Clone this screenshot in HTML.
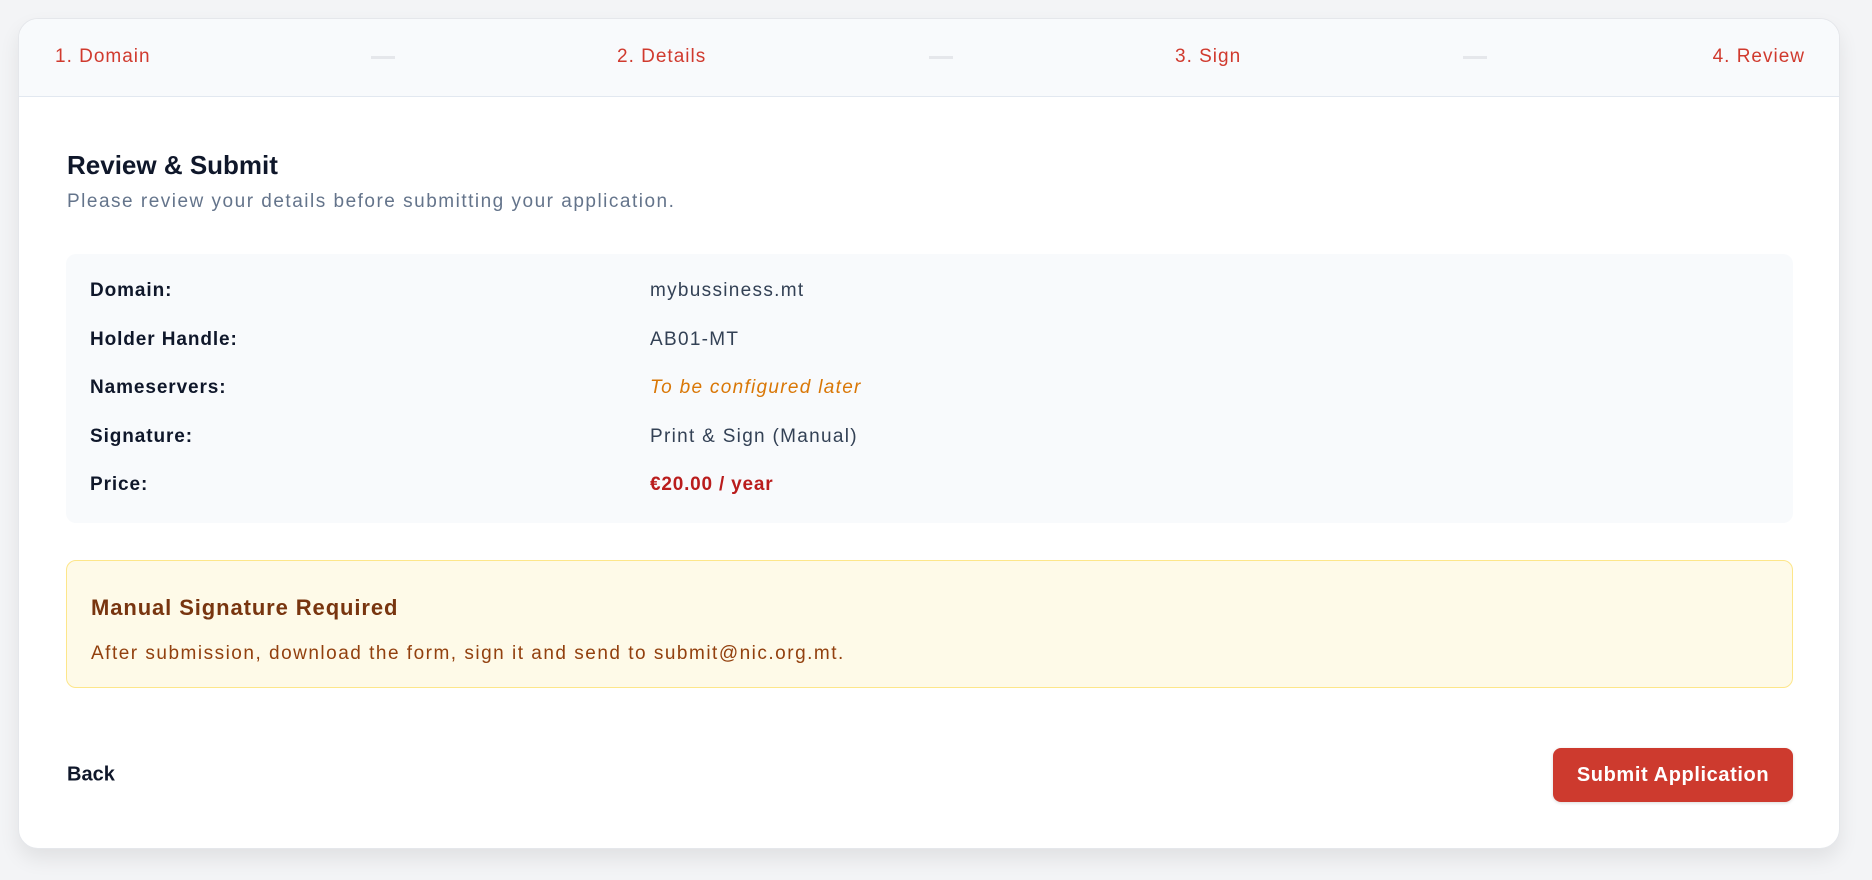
<!DOCTYPE html>
<html><head><meta charset="utf-8"><style>
*{box-sizing:border-box;margin:0;padding:0}
body{width:1872px;height:880px;background:#f3f4f6;font-family:"Liberation Sans",sans-serif;position:relative;overflow:hidden}
.card{position:absolute;left:18px;top:18px;width:1822px;height:831px;background:#fff;border:1px solid #e5e7eb;border-radius:20px;box-shadow:0 10px 20px rgba(0,0,0,.08);overflow:hidden}
.hdr{position:absolute;left:0;top:0;right:0;height:78px;background:#f8fafc;border-bottom:1px solid #e2e8f0}
.st{position:absolute;top:38px;transform:translateY(-50%);color:#d03a2e;font-size:19px;white-space:nowrap;letter-spacing:1px}
.dash{position:absolute;top:37px;width:24px;height:3px;background:#e5e7eb}
.abs{position:absolute;white-space:nowrap}
.box{position:absolute;left:47px;top:235px;width:1727px;height:269px;background:#f8fafc;border-radius:10px}
.lab{position:absolute;left:24px;font-size:19px;font-weight:bold;color:#0f172a;transform:translateY(-50%);letter-spacing:0.9px}
.val{position:absolute;left:584px;font-size:19px;color:#334155;transform:translateY(-50%);letter-spacing:1.3px}
.warn{position:absolute;left:47px;top:541px;width:1727px;height:128px;background:#fefae8;border:1px solid #fde68a;border-radius:10px}
.btn{position:absolute;left:1534px;top:729px;width:240px;height:54px;background:#cd3a2e;border-radius:8px;color:#fff;font-size:20px;font-weight:bold;display:flex;align-items:center;justify-content:center;box-shadow:0 1px 3px rgba(0,0,0,.15);letter-spacing:0.6px}
</style></head><body>
<div class="card">
 <div class="hdr">
  <div class="st" style="left:36px">1. Domain</div>
  <div class="dash" style="left:352px"></div>
  <div class="st" style="left:598px">2. Details</div>
  <div class="dash" style="left:910px"></div>
  <div class="st" style="left:1156px">3. Sign</div>
  <div class="dash" style="left:1444px"></div>
  <div class="st" style="right:34px">4. Review</div>
 </div>
 <div class="abs" style="left:48px;top:131px;font-size:26px;font-weight:bold;color:#0f172a">Review &amp; Submit</div>
 <div class="abs" style="left:48px;top:172px;font-size:19px;color:#64748b;letter-spacing:1.5px">Please review your details before submitting your application.</div>
 <div class="box">
  <div class="lab" style="top:37px">Domain:</div><div class="val" style="top:37px">mybussiness.mt</div>
  <div class="lab" style="top:86px">Holder Handle:</div><div class="val" style="top:86px">AB01-MT</div>
  <div class="lab" style="top:134px">Nameservers:</div><div class="val" style="top:134px;color:#d97706;font-style:italic">To be configured later</div>
  <div class="lab" style="top:183px">Signature:</div><div class="val" style="top:183px">Print &amp; Sign (Manual)</div>
  <div class="lab" style="top:231px">Price:</div><div class="val" style="top:231px;color:#b91c1c;font-weight:bold;letter-spacing:0.8px">€20.00 / year</div>
 </div>
 <div class="warn">
  <div class="abs" style="left:24px;top:47px;transform:translateY(-50%);font-size:22px;font-weight:bold;color:#78350f;letter-spacing:0.9px">Manual Signature Required</div>
  <div class="abs" style="left:24px;top:93px;transform:translateY(-50%);font-size:19px;color:#92400e;letter-spacing:1.5px">After submission, download the form, sign it and send to submit@nic.org.mt.</div>
 </div>
 <div class="abs" style="left:48px;top:756px;transform:translateY(-50%);font-size:20px;font-weight:bold;color:#0f172a">Back</div>
 <div class="btn">Submit Application</div>
</div>
</body></html>
